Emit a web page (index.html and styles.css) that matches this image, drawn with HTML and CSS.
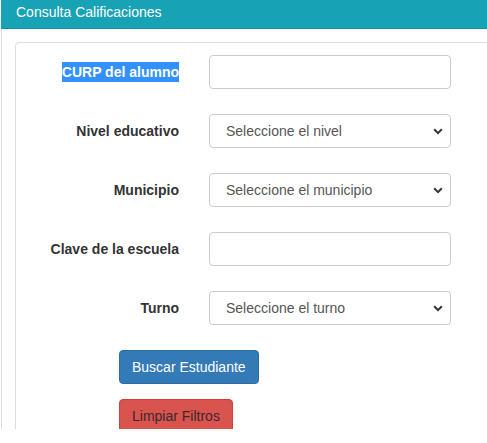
FILE: index.html
```html
<!DOCTYPE html>
<html lang="es">
<head>
<meta charset="utf-8">
<title>Consulta Calificaciones</title>
<link rel="stylesheet" href="styles.css">
</head>
<body>
<div class="page">
  <div class="panel">
    <div class="panel-heading">Consulta Calificaciones</div>
    <div class="panel-body">
      <div class="card">
        <form class="form">
          <label class="label" for="curp"><span class="selected">CURP del alumno</span></label>
          <input class="control" id="curp" type="text">

          <label class="label" for="nivel">Nivel educativo</label>
          <div class="select-wrap">
            <select class="control select" id="nivel"><option>Seleccione el nivel</option></select>
            <svg class="chevron" width="10" height="7" viewBox="0 0 10 7"><path d="M1.2 1.3 L5 5.1 L8.8 1.3" fill="none" stroke="#333" stroke-width="2"/></svg>
          </div>

          <label class="label" for="mun">Municipio</label>
          <div class="select-wrap">
            <select class="control select" id="mun"><option>Seleccione el municipio</option></select>
            <svg class="chevron" width="10" height="7" viewBox="0 0 10 7"><path d="M1.2 1.3 L5 5.1 L8.8 1.3" fill="none" stroke="#333" stroke-width="2"/></svg>
          </div>

          <label class="label" for="clave">Clave de la escuela</label>
          <input class="control" id="clave" type="text">

          <label class="label" for="turno">Turno</label>
          <div class="select-wrap">
            <select class="control select" id="turno"><option>Seleccione el turno</option></select>
            <svg class="chevron" width="10" height="7" viewBox="0 0 10 7"><path d="M1.2 1.3 L5 5.1 L8.8 1.3" fill="none" stroke="#333" stroke-width="2"/></svg>
          </div>
        </form>
        <div class="actions">
          <button class="btn btn-primary" type="button">Buscar Estudiante</button>
          <button class="btn btn-danger" type="button">Limpiar Filtros</button>
        </div>
      </div>
    </div>
  </div>
</div>
</body>
</html>
```
FILE: styles.css
```css
html, body {
  margin: 0;
  padding: 0;
  background: #fff;
}
body {
  font-family: "Liberation Sans", Arial, sans-serif;
  font-size: 14px;
  color: #333;
}
.page {
  height: 429px;
  overflow: hidden;
}
.panel {
  margin-left: 1px;
  border-left: 1px solid #ddd;
  min-height: 429px;
}
.panel-heading {
  margin-left: -1px;
  height: 28px;
  line-height: 24px;
  padding-left: 15px;
  background: #18a2b6;
  border-bottom: 1px solid #1590a3;
  color: #fff;
  font-size: 14px;
}
.panel-body {
  padding: 13px 0 0 13px;
  margin-right: -20px;
}
.card {
  border: 1px solid #ddd;
  border-radius: 4px;
  padding-top: 12px;
  min-height: 420px;
}
.form {
  display: grid;
  grid-template-columns: 163px 242px;
  column-gap: 30px;
  row-gap: 25px;
  align-items: center;
}
.label {
  text-align: right;
  font-weight: bold;
  font-size: 14px;
  color: #333;
}
.selected {
  display: inline-block;
  line-height: 20px;
  background: #3390fc;
  color: #fff;
}
.control {
  box-sizing: border-box;
  width: 242px;
  height: 34px;
  margin: 0;
  border: 1px solid #ccc;
  border-radius: 4px;
  background: #fff;
  font-family: "Liberation Sans", Arial, sans-serif;
  font-size: 14px;
  color: #555;
  padding: 0 16px;
  outline: none;
}
.select-wrap {
  position: relative;
  width: 242px;
  height: 34px;
}
.select {
  appearance: none;
  -webkit-appearance: none;
}
.chevron {
  position: absolute;
  left: 224px;
  top: 14px;
}
.actions {
  display: flex;
  flex-direction: column;
  align-items: flex-start;
  gap: 15px;
  padding: 25px 0 0 103px;
}
.btn {
  box-sizing: border-box;
  height: 34px;
  padding: 0 12px;
  border: 1px solid transparent;
  border-radius: 4px;
  font-family: "Liberation Sans", Arial, sans-serif;
  font-size: 14px;
  cursor: pointer;
}
.btn-primary {
  background: #337ab7;
  border-color: #2e6da4;
  color: #fff;
}
.btn-danger {
  background: #d9534f;
  border-color: #d43f3a;
  color: #3a2a2a;
}
```
